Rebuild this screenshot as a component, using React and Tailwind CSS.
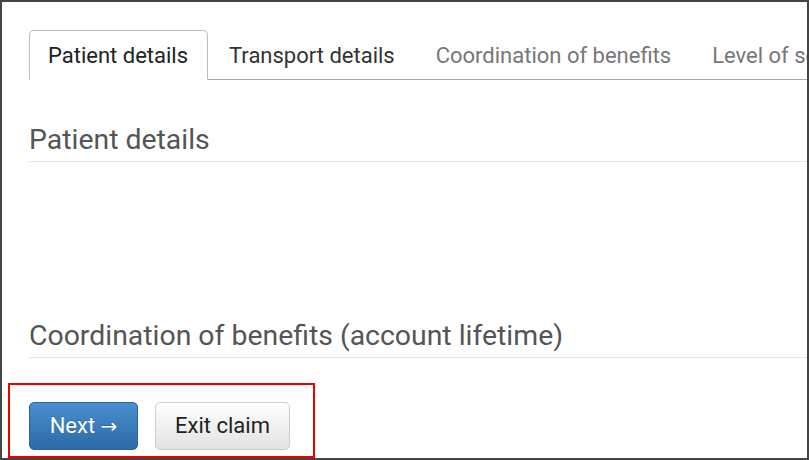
export default function App() {
  const tabs = [
    { label: 'Patient details', active: true, tone: 'text-[#222]' },
    { label: 'Transport details', tone: 'text-[#333]' },
    { label: 'Coordination of benefits', tone: 'text-[#777]' },
    { label: 'Level of service', tone: 'text-[#777]' },
  ]

  return (
    <div className="w-[809px] h-[460px] border-2 border-[#444] bg-white overflow-hidden font-['Roboto',sans-serif]">
      {/* Tabs */}
      <div className="pl-[27px] pt-[28px]">
        <div className="flex border-b border-[#aaa] whitespace-nowrap w-[1000px]">
          {tabs.map(t => (
            <div
              key={t.label}
              className={
                t.active
                  ? `-mb-px mr-[2px] h-[50px] flex items-center pl-[18px] pr-[19px] text-[22px] border border-[#bbb] border-b-white bg-white rounded-t-[5px] ${t.tone}`
                  : `-mb-px mr-[2px] h-[50px] flex items-center pl-[18px] pr-[19px] text-[22px] border border-transparent ${t.tone}`
              }
            >
              {t.label}
            </div>
          ))}
        </div>
      </div>

      {/* Patient details */}
      <div className="ml-[27px] mt-[46px] border-b border-[#e5e5e5] pb-[7px]">
        <h2 className="text-[28.4px] leading-[28px] text-[#555]">Patient details</h2>
      </div>

      {/* Coordination of benefits */}
      <div className="ml-[27px] mt-[160px] border-b border-[#e5e5e5] pb-[7px]">
        <h2 className="text-[28.4px] leading-[28px] text-[#555]">Coordination of benefits (account lifetime)</h2>
      </div>

      {/* Actions */}
      <div className="ml-[6px] mt-[25px] w-[307px] border-2 border-[#e00] pt-[17px] pb-[6px] pl-[19px] flex gap-[17px]">
        <button className="h-[48px] w-[109px] rounded-[5px] border border-[#2b669a] bg-gradient-to-b from-[#4a8fcf] to-[#2c6aa8] text-white text-[22px] leading-none [text-shadow:0_-1px_0_rgba(0,0,0,0.2)]">
          Next <span className="font-['DejaVu_Sans',sans-serif] text-[20px]">→</span>
        </button>
        <button className="h-[48px] w-[135px] rounded-[5px] border border-[#ccc] bg-gradient-to-b from-white to-[#e2e2e2] text-[#222] text-[22px] leading-none">
          Exit claim
        </button>
      </div>
    </div>
  )
}
